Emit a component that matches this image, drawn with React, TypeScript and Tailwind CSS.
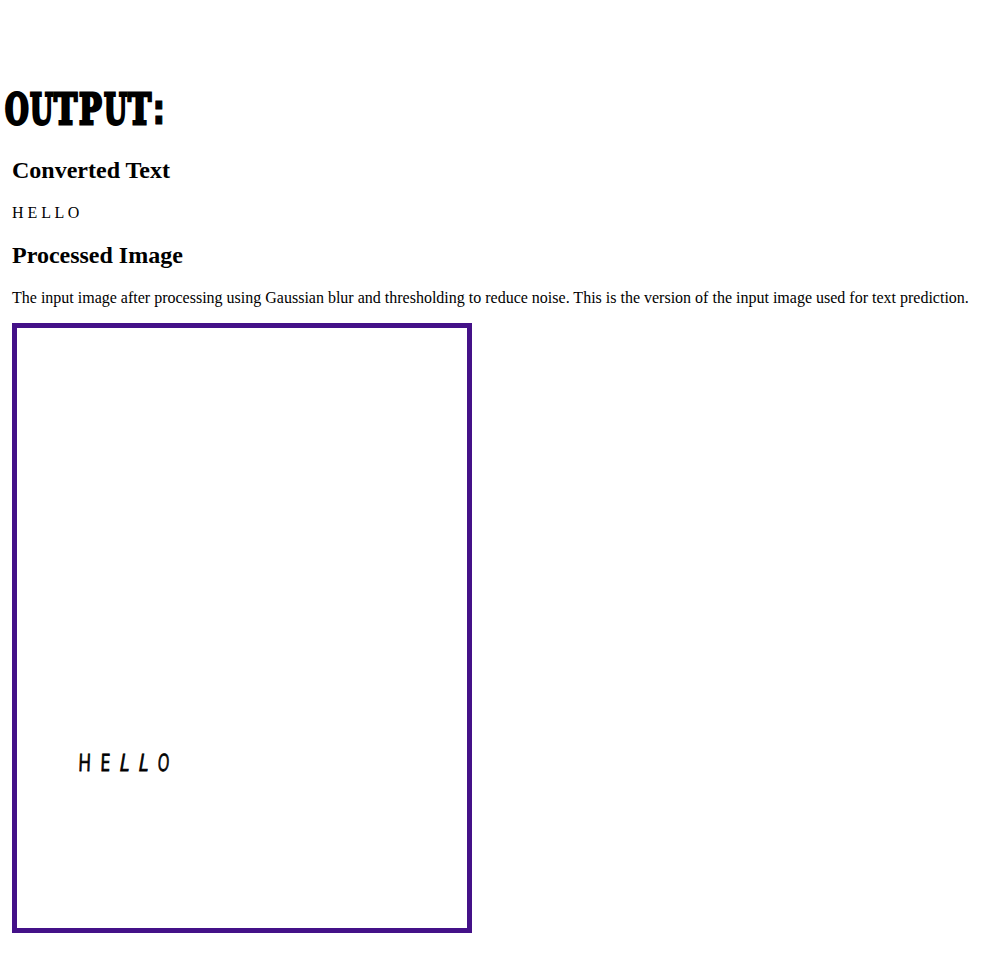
const ink = "inline-block origin-bottom-left leading-none [-webkit-text-stroke:0.9px_black]";
const slab = "inline-block origin-left";

export default function App() {
  return (
    <main className="h-[956px] overflow-hidden bg-white pt-[84px] font-['Liberation_Serif','Times_New_Roman',serif] text-black">
      <h1 className="h-[53px] pl-[5px] font-['DejaVu_Serif_Condensed','DejaVu_Serif',serif] text-[42px] leading-[52px] font-bold whitespace-nowrap [-webkit-text-stroke:2.8px_black]">
        <span className="inline-block w-[25px]"><span className={`${slab} scale-x-[0.72]`}>O</span></span>
        <span className="inline-block w-[24px]"><span className={`${slab} scale-x-[0.7]`}>U</span></span>
        <span className="inline-block w-[25px]"><span className={`${slab} scale-x-[0.82]`}>T</span></span>
        <span className="inline-block w-[25px]"><span className={`${slab} scale-x-[0.8]`}>P</span></span>
        <span className="inline-block w-[24px]"><span className={`${slab} scale-x-[0.7]`}>U</span></span>
        <span className="inline-block w-[24px]"><span className={`${slab} scale-x-[0.82]`}>T</span></span>
        <span className="inline-block w-[12px] font-['DejaVu_Sans_Condensed','DejaVu_Sans',sans-serif] [-webkit-text-stroke:1px_black]"><span className={`${slab} scale-x-[0.9]`}>:</span></span>
      </h1>
      <div className="px-3 pt-5">
        <h2 className="text-2xl leading-[27px] font-bold">Converted Text</h2>
        <p className="mt-5 text-base leading-[18px]">H E L L O</p>
        <h2 className="mt-5 text-2xl leading-[27px] font-bold">Processed Image</h2>
        <p className="mt-5 text-base leading-[18px] whitespace-nowrap">
          The input image after processing using Gaussian blur and thresholding to reduce noise. This is the version of the input image used for text prediction.
        </p>
        <div className="mt-4 h-[610px] w-[460px] border-[5px] border-[#441188] pt-[418px] pl-[61px] font-['Open_Sans',sans-serif] text-2xl">
          <div className="flex h-6">
            <span className="w-[22px]"><span className={`${ink} scale-x-[0.72] -skew-x-3`}>H</span></span>
            <span className="w-[18px]"><span className={`${ink} scale-x-[0.74] -skew-x-3`}>E</span></span>
            <span className="w-[19px]"><span className={`${ink} scale-x-[0.8] -skew-x-12`}>L</span></span>
            <span className="w-[20px]"><span className={`${ink} scale-x-[0.8] -skew-x-12`}>L</span></span>
            <span className="w-[20px]"><span className={`${ink} scale-x-[0.62] -skew-x-6`}>O</span></span>
          </div>
        </div>
      </div>
    </main>
  );
}
